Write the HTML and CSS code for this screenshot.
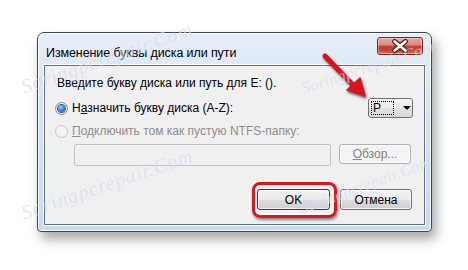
FILE: index.html
```html
<html lang="ru">
<head>
  <meta charset="UTF-8">
  <title>Изменение буквы диска или пути</title>
  <link rel="stylesheet" href="styles.css">
</head>
<body>

<div class="stage">

  <div class="window">
    <div class="titlebar">
      <span class="title">Изменение буквы диска или пути</span>
      <span class="close">
        <svg viewBox="0 0 46 18" width="46" height="18">
          <path d="M17.5 4.5 L28.5 13.5 M28.5 4.5 L17.5 13.5" class="x_shadow"/>
          <path d="M17.5 4.5 L28.5 13.5 M28.5 4.5 L17.5 13.5" class="x_mark"/>
        </svg>
      </span>
    </div>

    <div class="client">
      <p class="prompt">Введите букву диска или путь для E: ().</p>

      <div class="row">
        <label class="radio"><span class="dot dot--checked"></span>Н<u>а</u>значить букву диска (A-Z):</label>
        <div class="combo">
          <span class="combo_value">P</span>
          <span class="combo_caret"></span>
        </div>
      </div>

      <label class="radio radio--disabled"><span class="dot"></span><u>П</u>одключить том как пустую NTFS-папку:</label>

      <div class="row path_row">
        <div class="field"></div>
        <button class="btn btn--disabled"><u>О</u>бзор...</button>
      </div>

      <div class="actions">
        <button class="btn btn--ok">OK</button>
        <button class="btn">Отмена</button>
      </div>
    </div>
  </div>

  <!-- annotation arrow pointing at the drive letter -->
  <svg class="arrow" viewBox="0 0 56 56" width="56" height="56">
    <path d="M9 8 L37 37" class="arrow_shaft"/>
    <path d="M31 42 L44 30 L49 48 Z" class="arrow_head"/>
  </svg>

  <span class="mark mark--1">Soringpcrepair.Com</span>
  <span class="mark mark--2">Soringpcrepair.Com</span>
  <span class="mark mark--3">Soringpcrepair.Com</span>
  <span class="mark mark--4">Soringpcrepair.Com</span>

</div>

</body>
</html>
```

FILE: styles.css
```css
* {
  padding: 0;
  margin: 0;
  box-sizing: border-box;
}

body {
  margin: 0;
  background: #fff;
  font-family: 'Liberation Sans', Arial, sans-serif;
  font-size: 12px;
  color: #000;
}

.stage {
  position: relative;
  width: 468px;
  height: 270px;
  overflow: hidden;
  padding: 32px 0 0 37px;
}

/* window frame */
.window {
  width: 395px;
  height: 200px;
  border: 1px solid #3c4650;
  border-radius: 7px 7px 4px 4px;
  padding: 0 6px 6px 6px;
  background: linear-gradient(to bottom, #e6eef8 0%, #d4e3f3 40%, #c6daf0 100%);
  box-shadow: inset 0 0 0 1px rgba(255,255,255,0.8), 4px 7px 12px rgba(0,0,0,0.35);
}

.titlebar {
  height: 32px;
  display: flex;
  justify-content: space-between;
  align-items: flex-start;
}

.title {
  padding: 13px 0 0 2px;
  font-size: 12.5px;
  letter-spacing: -0.1px;
  color: #000;
}

.close {
  margin: 4px 2px 0 0;
  width: 46px;
  height: 18px;
  border: 1px solid #6d2b24;
  border-radius: 3px;
  background: linear-gradient(to bottom, #e7a79c 0%, #dc8f84 40%, #c73a2d 55%, #c8463a 80%, #de7a66 100%);
  box-shadow: inset 0 0 0 1px rgba(255,255,255,0.35);
  display: flex;
}
.close svg { margin: -1px; }
.x_shadow { stroke: #4a2320; stroke-width: 5; stroke-linecap: round; fill: none; }
.x_mark   { stroke: #fff; stroke-width: 2.6; stroke-linecap: round; fill: none; }

/* client area */
.client {
  height: 160px;
  border: 1px solid #65717d;
  background: #f0f0f0;
  box-shadow: 0 0 0 1px rgba(255,255,255,0.85);
  padding: 10px 11px 0 10px;
}

.prompt {
  line-height: 15px;
  padding-left: 2px;
}

.row {
  display: flex;
  justify-content: space-between;
  align-items: center;
}
.row:first-of-type { margin-top: 7px; height: 20px; }

.radio {
  display: flex;
  align-items: center;
  line-height: 15px;
}
.radio--disabled {
  margin-top: 6px;
  color: #8d8d8d;
}

.dot {
  width: 13px;
  height: 13px;
  margin-right: 4px;
  border-radius: 50%;
  border: 1px solid #8b8d8f;
  background: radial-gradient(circle at 40% 35%, #fff 0%, #e9e9e9 60%, #d6d6d6 100%);
  display: flex;
  align-items: center;
  justify-content: center;
}
.dot--checked::after {
  content: "";
  width: 7px;
  height: 7px;
  border-radius: 50%;
  background: radial-gradient(circle at 40% 35%, #a9d6ff 0%, #3d8ad6 45%, #164f96 100%);
  box-shadow: 0 0 0 1px #2c5f98;
}
.radio--disabled .dot {
  border-color: #c6c6c6;
  background: #f4f4f4;
}

u { text-decoration: underline; text-underline-offset: 1px; }

.combo {
  width: 45px;
  height: 20px;
  border: 1px solid #707070;
  border-radius: 3px;
  background: linear-gradient(to bottom, #f3f3f3 0%, #ececec 50%, #e0e0e0 51%, #dadada 100%);
  display: flex;
  align-items: center;
  padding: 0 0 0 2px;
}
.combo_value {
  width: 23px;
  height: 14px;
  border: 1px dotted #000;
  line-height: 12px;
  padding-left: 1px;
}
.combo_caret {
  margin-left: 9px;
  width: 0;
  height: 0;
  border-left: 4px solid transparent;
  border-right: 4px solid transparent;
  border-top: 4px solid #000;
}

.path_row {
  margin-top: 5px;
  padding-left: 19px;
  align-items: flex-start;
}

.field {
  width: 257px;
  height: 22px;
  border: 1px solid #c2c2c2;
  border-radius: 2px;
  background: #f0f0f0;
}

.btn {
  font-family: inherit;
  font-size: 12px;
  width: 72px;
  height: 20px;
  margin-right: 2px;
  border: 1px solid #707070;
  border-radius: 3px;
  color: #000;
  background: linear-gradient(to bottom, #f2f2f2 0%, #ebebeb 50%, #dddddd 51%, #cfcfcf 100%);
  box-shadow: inset 0 0 0 1px rgba(255,255,255,0.7);
}

.btn--disabled {
  color: #838383;
  border-color: #adb2b5;
  background: #f4f4f4;
}

.actions {
  margin-top: 23px;
  display: flex;
  justify-content: flex-end;
  gap: 9px;
}
.actions .btn { height: 21px; margin-right: 1px; }

.btn--ok {
  position: relative;
  width: 73px;
  border-color: #3c3c3c;
}
/* red highlight ring of the screenshot annotation */
.btn--ok::after {
  content: "";
  position: absolute;
  top: -8px;
  left: -6px;
  right: -8px;
  bottom: -9px;
  border: 3px solid #e0141c;
  border-radius: 8px;
  box-shadow: inset 0 0 0 2px #fff, 1px 2px 3px rgba(0,0,0,0.45);
}

.arrow {
  position: absolute;
  left: 316px;
  top: 48px;
  filter: drop-shadow(1px 2px 1px rgba(0,0,0,0.55));
}
.arrow_shaft { stroke: #d8141c; stroke-width: 5; stroke-linecap: round; fill: none; }
.arrow_head { fill: #d8141c; stroke: #d8141c; stroke-width: 1.5; stroke-linejoin: round; }

/* site watermark */
.mark {
  position: absolute;
  font-family: 'Liberation Serif', serif;
  font-style: italic;
  font-size: 20px;
  letter-spacing: 1px;
  color: rgba(165, 175, 225, 0.32);
  text-shadow: 0 0 1px rgba(255,255,255,0.6);
  transform-origin: left center;
  white-space: nowrap;
}
.mark--1 { left: 22px; top: 76px; transform: rotate(-19deg); }
.mark--2 { left: 302px; top: 80px; font-size: 16px; letter-spacing: 0.5px; transform: rotate(-18deg); }
.mark--3 { left: 22px; top: 202px; transform: rotate(-19deg); }
.mark--4 { left: 300px; top: 200px; font-size: 16px; letter-spacing: 0.5px; transform: rotate(-20deg); }
```
